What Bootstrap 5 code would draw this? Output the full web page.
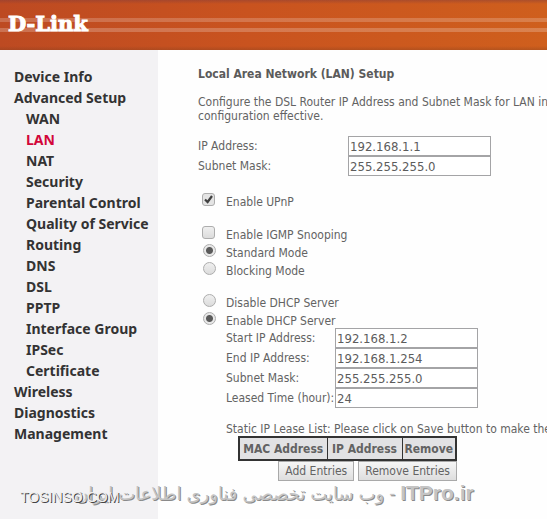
<!DOCTYPE html>
<html lang="en">
<head>
<meta charset="utf-8">
<meta name="viewport" content="width=device-width, initial-scale=1">
<title>D-Link LAN Setup</title>
<link rel="stylesheet" href="https://cdn.jsdelivr.net/npm/bootstrap@5.3.0/dist/css/bootstrap.min.css">
<style>
  body { font-family: "DejaVu Sans Condensed", "Noto Sans", sans-serif; font-size: 12px; line-height: 14px; color: #636363; background: #fefefe; }
  .page { overflow: hidden; }
  .topbar {
    height: 50px; padding: 12px 8px;
    background:
      linear-gradient(rgba(130,60,60,.45), transparent 4px, transparent 46px, rgba(120,60,30,.3)),
      linear-gradient(transparent 18px, rgba(255,255,255,.2) 18px, rgba(255,255,255,.2) 22px, transparent 22px, transparent 28px, rgba(255,255,255,.22) 28px, rgba(255,255,255,.22) 32px, transparent 32px),
      linear-gradient(90deg, #bd4a22, #c9531f 45%, #cf5f1d);
  }
  .side { width: 158px; background: #f3f2f4; padding: 16px 0 0 14px; font-family: "Noto Sans", sans-serif; }
  .side a { color: #333; font-weight: bold; font-size: 14px; line-height: 21px; text-decoration: none; white-space: nowrap; }
  .side .sub { padding-left: 12px; }
  .side a.active { color: #d2073a; }
  .main { padding: 17px 0 0 40px; white-space: nowrap; }
  .main h1 { font-size: 12px; line-height: 14px; font-weight: bold; color: #5b5b5b; }
  .desc { margin: 14px 0 13px; }
  .field { height: 20px; }
  .field input { width: 143px; height: 20px; border: 1px solid #a4a4a6; padding: 0 1px; color: #5c5c5c; background: #fff; font-size: 13px; border-radius: 0; }
  .lan label { width: 150px; }
  .dhcp label { width: 109px; }
  .indent { padding-left: 28px; }
  .choices { gap: 2px; padding-left: 4px; }
  .choices label { padding: 2px 0 0 11px; }
  .choices input { appearance: none; width: 13px; height: 13px; margin: 0; border: 1px solid #adadad; background: linear-gradient(#efefef, #dcdcdc); border-radius: 3px; }
  .choices input[type=radio] { border-radius: 50%; margin: 0 -1px 0 1px; }
  .choices input[type=radio]:checked { background: radial-gradient(circle, #5a5a5a 3px, #e8e8e8 4px); }
  .choices input[type=checkbox]:checked { background: url("data:image/svg+xml,%3Csvg xmlns='http://www.w3.org/2000/svg' viewBox='0 0 11 11'%3E%3Cpath d='M2 5.5L4.6 8L9 2' fill='none' stroke='%23404040' stroke-width='2.2'/%3E%3C/svg%3E") #e4e4e4; }
  .gap-a { margin-top: 17px; }
  .gap-b { margin-top: 16px; }
  .gap-c { margin-top: 14px; }
  .leases { width: 219px; margin-left: 40px; border: 2px solid #333; background: #e2e2e4; }
  .leases th { border: 1px solid #333; padding: 3px 0; height: 23px; text-align: center; }
  .leases .c1 { width: 88px; }
  .leases .c2 { width: 75px; }
  .acts { width: 219px; margin-left: 40px; }
  .acts button { height: 20px; padding: 0 6px; border: 1px solid #a9a9a9; background: linear-gradient(#f6f6f6, #dedede); color: #636363; }
  .marks { left: 0; bottom: 0; height: 40px; }
  .mark-fa { left: 75px; top: 0; font: 18px/28px "Liberation Sans", "DejaVu Sans", sans-serif; color: #c4c4c4; text-shadow: 1px 1px 0 #8a8a8a; white-space: nowrap; }
  .mark-fa bdi { font-size: 21px; font-weight: bold; }
  .mark-en { left: 20px; top: 9px; font: 14px/18px "Liberation Sans", sans-serif; color: #eee; text-shadow: 1px 1px 0 #444; }
</style>
</head>
<body>
<div class="page position-relative min-vh-100 d-flex flex-column">
  <header class="topbar">
    <svg class="d-block" width="90" height="24" role="img" aria-label="D-Link"><text x="0" y="19" font-family="DejaVu Serif" font-weight="bold" font-size="21" fill="#fff" stroke="#fff">D-Link</text></svg>
  </header>
  <div class="d-flex flex-grow-1">
    <nav class="side d-flex flex-column flex-shrink-0">
      <a href="#">Device Info</a>
      <a href="#">Advanced Setup</a>
      <div class="sub d-flex flex-column">
        <a href="#">WAN</a>
        <a href="#" class="active">LAN</a>
        <a href="#">NAT</a>
        <a href="#">Security</a>
        <a href="#">Parental Control</a>
        <a href="#">Quality of Service</a>
        <a href="#">Routing</a>
        <a href="#">DNS</a>
        <a href="#">DSL</a>
        <a href="#">PPTP</a>
        <a href="#">Interface Group</a>
        <a href="#">IPSec</a>
        <a href="#">Certificate</a>
      </div>
      <a href="#">Wireless</a>
      <a href="#">Diagnostics</a>
      <a href="#">Management</a>
    </nav>
    <main class="main flex-grow-1">
      <h1 class="mb-0">Local Area Network (LAN) Setup</h1>
      <p class="desc">Configure the DSL Router IP Address and Subnet Mask for LAN in<br>configuration effective.</p>
      <div class="lan">
        <div class="field d-flex align-items-center"><label for="ip">IP Address:</label><input id="ip" value="192.168.1.1"></div>
        <div class="field d-flex align-items-center"><label for="mask">Subnet Mask:</label><input id="mask" value="255.255.255.0"></div>
      </div>
      <div class="choices gap-a d-flex flex-column">
        <div class="d-flex align-items-start"><input type="checkbox" id="upnp" checked><label for="upnp">Enable UPnP</label></div>
      </div>
      <div class="choices gap-a d-flex flex-column">
        <div class="d-flex align-items-start"><input type="checkbox" id="igmp"><label for="igmp">Enable IGMP Snooping</label></div>
        <div class="d-flex align-items-start"><input type="radio" name="mode" id="std" checked><label for="std">Standard Mode</label></div>
        <div class="d-flex align-items-start"><input type="radio" name="mode" id="blk"><label for="blk">Blocking Mode</label></div>
      </div>
      <div class="choices gap-b d-flex flex-column">
        <div class="d-flex align-items-start"><input type="radio" name="dhcp" id="off"><label for="off">Disable DHCP Server</label></div>
        <div class="d-flex align-items-start"><input type="radio" name="dhcp" id="on" checked><label for="on">Enable DHCP Server</label></div>
      </div>
      <div class="dhcp indent">
        <div class="field d-flex align-items-center"><label for="start">Start IP Address:</label><input id="start" value="192.168.1.2"></div>
        <div class="field d-flex align-items-center"><label for="end">End IP Address:</label><input id="end" value="192.168.1.254"></div>
        <div class="field d-flex align-items-center"><label for="dmask">Subnet Mask:</label><input id="dmask" value="255.255.255.0"></div>
        <div class="field d-flex align-items-center"><label for="time">Leased Time (hour):</label><input id="time" value="24"></div>
      </div>
      <p class="indent gap-c mb-0">Static IP Lease List: Please click on Save button to make the</p>
      <table class="leases"><thead><tr><th class="c1">MAC Address</th><th class="c2">IP Address</th><th>Remove</th></tr></thead></table>
      <div class="acts d-flex justify-content-end gap-1"><button type="button">Add Entries</button><button type="button">Remove Entries</button></div>
    </main>
  </div>
  <div class="marks position-absolute w-100">
    <div class="mark-fa position-absolute" dir="rtl" lang="fa"><bdi>ITPro.ir</bdi> - وب سایت تخصصی فناوری اطلاعات ایران</div>
    <div class="mark-en position-absolute">TOSINSO.COM</div>
  </div>
</div>
<script src="https://cdn.jsdelivr.net/npm/bootstrap@5.3.0/dist/js/bootstrap.bundle.min.js"></script>
</body>
</html>
